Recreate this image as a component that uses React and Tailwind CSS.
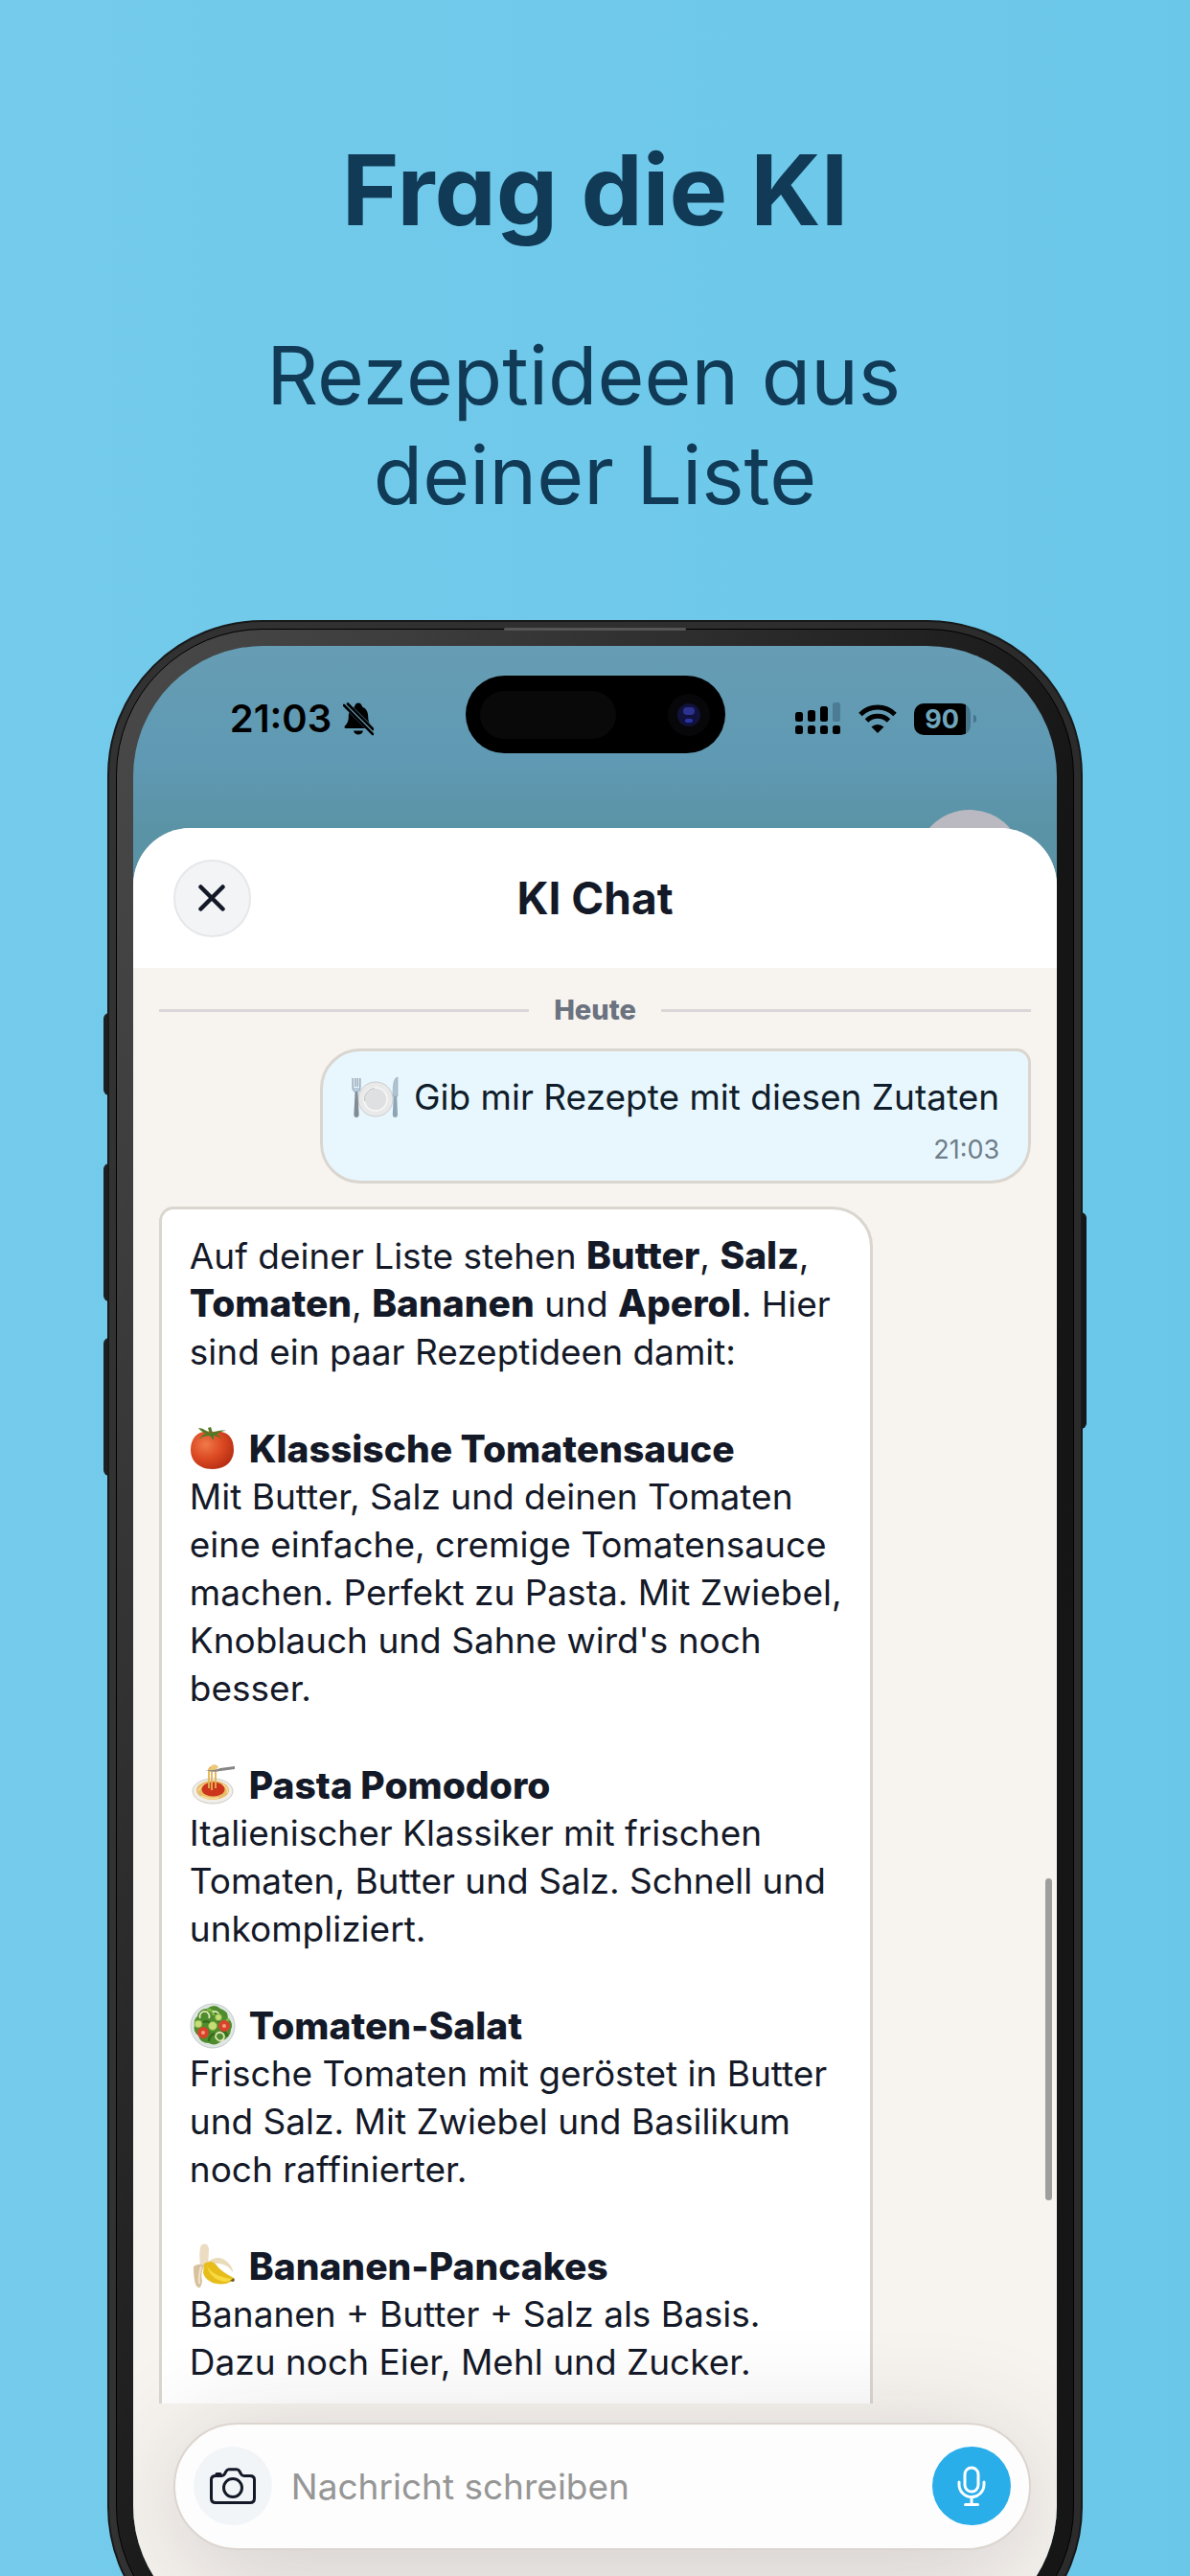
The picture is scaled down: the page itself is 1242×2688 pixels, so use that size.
const SANS = 'font-["Inter","Noto_Sans",sans-serif]';

function MutedBell() {
  return (
    <svg className="h-9 w-8" viewBox="0 0 32 36" aria-hidden="true">
      <path d="M12 5.500C12.500 2.800 14 1.500 16 1.500s3.500 1.300 4 4c4 1.500 6 5 6.200 10 .1 5 1 7 3.800 10 .9 1 .5 2.500-1 2.500H3c-1.500 0-2-1.500-1-2.500 2.800-3 3.700-5 3.800-10C6 10.500 8 7 12 5.500z" fill="#000" />
      <path d="M11 30.500h10c-.6 2.600-2.600 4-5 4s-4.400-1.400-5-4z" fill="#000" />
      <path d="M1.500 1.500 32 32" stroke="#639bb3" strokeWidth="7" />
      <path d="M1 4 31 34" stroke="#000" strokeWidth="2.600" strokeLinecap="round" />
      <path d="M5 2.500 31.500 29" stroke="#000" strokeWidth="2.600" strokeLinecap="round" />
    </svg>
  );
}

function Signal() {
  return (
    <svg className="h-[34px] w-12" viewBox="0 0 48 34" aria-hidden="true">
      <rect x="0" y="10" width="8" height="10" rx="2.500" />
      <rect x="13" y="8" width="8" height="12" rx="2.500" />
      <rect x="26" y="4" width="8" height="16" rx="2.500" />
      <rect x="39" y="0" width="8" height="20" rx="2.500" fill="#4b7c94" />
      <rect x="0" y="24" width="8" height="9" rx="2.500" />
      <rect x="13" y="24" width="8" height="9" rx="2.500" />
      <rect x="26" y="24" width="8" height="9" rx="2.500" />
      <rect x="39" y="24" width="8" height="9" rx="2.500" />
    </svg>
  );
}

function Wifi() {
  return (
    <svg className="h-[31px] w-10" viewBox="0 0 40 31" aria-hidden="true">
      <path d="M2 10.500a25.500 25.500 0 0 1 36 0" fill="none" stroke="#000" strokeWidth="5" />
      <path d="M8.500 17a16.300 16.300 0 0 1 23 0" fill="none" stroke="#000" strokeWidth="5" />
      <path d="M13.500 23.500a9.500 9.500 0 0 1 13 0L20 30z" />
    </svg>
  );
}

function Plate() {
  return (
    <svg className="h-11 w-[50px] shrink-0" viewBox="0 0 50 44" role="img" aria-label="Teller">
      <circle cx="25" cy="24" r="18" fill="#e9e9ea" stroke="#c9ccd0" strokeWidth="1" />
      <circle cx="25" cy="24" r="12" fill="#dfe0e1" stroke="#f8f8f8" strokeWidth="1.500" />
      <path d="M13.500 26A11.500 11.500 0 0 1 24 12.500" fill="none" stroke="#c2c3c5" strokeWidth="1" />
      <path d="M1.200 2v9.500q0 4 3.800 5 3.800-1 3.800-5V2M3.800 2v9M6.300 2v9" fill="none" stroke="#9fb0bd" strokeWidth="1.600" />
      <path d="M2 12h6l-1 4H3z" fill="#b4cbdd" />
      <path d="M3.600 16h2.800l1.200 24q0 3-2.600 3t-2.600-3z" fill="#818b93" />
      <path d="M48 1c-4 1-5 8-4.800 20H48z" fill="#afc2cf" stroke="#8fa2b0" strokeWidth=".6" />
      <path d="M43.800 21h3.400l.8 19q0 3-2.600 3t-2.600-3z" fill="#8fa5b6" />
    </svg>
  );
}

function Tomato() {
  return (
    <svg className="size-12 shrink-0" viewBox="0 0 48 48" role="img" aria-label="Tomate">
      <defs>
        <radialGradient id="tomato" cx=".35" cy=".35" r=".75">
          <stop offset="0" stopColor="#f0794a" />
          <stop offset=".5" stopColor="#dc4a22" />
          <stop offset="1" stopColor="#b32b12" />
        </radialGradient>
      </defs>
      <path d="M24 6C9 3 1 12 1 25c0 12 9 20 23 20s22-9 22-20C46 11 39 4 24 6z" fill="url(#tomato)" />
      <path d="M21 8 19 2l3-1 2 6c5-2 9-3 14-2-4 0-8 2-10 4 3 1 4 2 5 4-3-2-6-3-8-3l0 5-4-5c-4 0-8 1-11 4 1-3 4-5 7-6C14 6 11 5 9 2c4 0 9 3 12 6z" fill="#4f7a26" />
    </svg>
  );
}

function Spaghetti() {
  return (
    <svg className="size-12 shrink-0" viewBox="0 0 48 48" role="img" aria-label="Spaghetti">
      <ellipse cx="24" cy="30" rx="21" ry="13" fill="#f0eee9" stroke="#cfcac2" />
      <ellipse cx="24" cy="29" rx="17" ry="10" fill="#e8bd6b" />
      <path d="M9 30q4-8 14-8M12 35q8 4 18 2M34 23q7 4 5 9" stroke="#f8db98" strokeWidth="1.500" fill="none" />
      <ellipse cx="24.500" cy="28" rx="12" ry="7.500" fill="#cc351c" />
      <path d="M20 27V9q0-4 4-4h4M23 29V8M27 27V6" stroke="#e3b254" strokeWidth="1.800" fill="none" />
      <path d="M23 3q5-2 7 2l-4 4-6 1z" fill="#ecc878" />
      <path d="M16 8q10 1 16-2l15-2v3l-15 2q-8 2-16-1z" fill="#868585" />
    </svg>
  );
}

function Salad() {
  return (
    <svg className="size-12 shrink-0" viewBox="0 0 48 48" role="img" aria-label="Salat">
      <circle cx="24" cy="24" r="23" fill="#dfe6e3" stroke="#c3ccc8" />
      <path d="M8 14q2-8 10-8 8-6 14 0 8 2 8 10 6 5 3 12-1 9-9 11-7 7-14 3-9 0-11-8-6-4-4-11-1-6 3-9z" fill="#4e8c2d" />
      <path d="M10 28q7-4 10 4M26 10q6 2 4 10M33 30q5-1 6 5M14 20q5-2 8 2M20 40q0-6 6-8" stroke="#336d1c" strokeWidth="2.500" fill="none" />
      <path d="M18 7q7 0 7 6M35 20q5 0 5-4" stroke="#7cb944" strokeWidth="3" fill="none" />
      <path d="M11 16a5 5 0 1 1 9 0M24 9q6-1 7 5M27 36a4.500 4.500 0 1 1 8 2q-4 4-8-2" stroke="#dfe5b4" strokeWidth="1.800" fill="none" />
      <g fill="#c4dd76" stroke="#7fab3d"><circle cx="9" cy="22" r="4" /><circle cx="24" cy="24" r="4.500" /><circle cx="30" cy="15" r="3.500" /></g>
      <circle cx="14" cy="31" r="6" fill="#d8432c" /><circle cx="36" cy="24" r="6" fill="#d8432c" />
      <circle cx="14" cy="31" r="2" fill="#f3a07e" /><circle cx="36" cy="24" r="2" fill="#f3a07e" />
    </svg>
  );
}

function Banana() {
  return (
    <svg className="size-12 shrink-0" viewBox="0 0 48 48" role="img" aria-label="Banane">
      <path d="M11 24Q9 3 13 1q6-2 7 5l-1 20z" fill="#ecdcc2" />
      <path d="M18 20Q30 10 40 20q5 5 5 10-5-8-14-9z" fill="#eadbb9" />
      <path d="M15 21q9-5 14 3 5 6 17 12-4 8-18 6-11-2-14-11z" fill="#e7bd1c" />
      <path d="M18 23q5 11 26 14-3 3-8 3-15-3-18-17z" fill="#f7da3f" />
      <path d="M46 36q2 3-1 4l-3-1z" fill="#6e5a20" />
      <path d="M4 24q6-4 11-1-4 8-2 16-1 8-4 7-5-2-5-22z" fill="#d8c19d" />
      <path d="M12 24q-3 10-2 18" stroke="#efe2cb" strokeWidth="2" fill="none" />
    </svg>
  );
}

function CameraIcon() {
  return (
    <svg className="h-[38px] w-12" viewBox="0 0 48 38" fill="none" stroke="#141928" strokeWidth="3" aria-hidden="true">
      <path d="M6 8.500h6.500c1.500 0 2.300-.7 3-2l1.500-2.700c.8-1.500 1.500-2.100 3-2.100h8c1.500 0 2.200.6 3 2.100l1.500 2.700c.7 1.300 1.500 2 3 2H42c3 0 4.500 1.200 4.500 4V32c0 3-1.500 4.500-4.500 4.500H6c-3 0-4.500-1.500-4.500-4.500V12.500c0-2.800 1.500-4 4.500-4z" strokeLinejoin="round" />
      <circle cx="24" cy="21" r="9.500" />
      <path d="M7 6.500h4" strokeLinecap="round" />
    </svg>
  );
}

function MicIcon() {
  return (
    <svg className="h-[42px] w-[30px]" viewBox="0 0 30 42" fill="none" stroke="#fff" strokeWidth="3" strokeLinecap="round" aria-hidden="true">
      <rect x="8" y="2" width="14" height="25" rx="7" />
      <path d="M2 17v2.500a13 13 0 0 0 26 0V17M15 33v7M8.500 40.500h13" />
    </svg>
  );
}

function Strong({ children }) {
  return <b className="text-[39px] leading-none font-extrabold">{children}</b>;
}

function Recipe({ icon, title, children }) {
  return (
    <section>
      <h2 className="flex h-[50px] items-center gap-[14px] text-[39px] font-extrabold">{icon}{title}</h2>
      <p>{children}</p>
    </section>
  );
}

function StatusBar() {
  return (
    <div className="grid h-[190px] shrink-0 grid-cols-[1fr_271px_1fr] items-start pt-[31px] text-black">
      <div className="flex h-[90px] items-center gap-3 pl-[101px]">
        <span className="text-[40px] leading-none font-semibold">21:03</span>
        <MutedBell />
      </div>
      <div className="flex h-[81px] items-center justify-between rounded-full bg-black pr-4 pl-[15px]">
        <span className="h-[50px] w-[142px] rounded-full bg-[#090909]" />
        <span className="flex size-11 items-center justify-center rounded-full bg-[#070709]">
          <span className="flex size-6 flex-col items-center justify-center gap-1 rounded-full bg-[#10123c]">
            <span className="h-2 w-3 rounded-full bg-[#2c328f]" />
            <span className="h-1 w-2 rounded-full bg-[#2734a6]" />
          </span>
        </span>
      </div>
      <div className="flex h-[90px] items-center gap-[18px] pl-[73px]">
        <Signal />
        <Wifi />
        <div className="flex items-center gap-[3px]">
          <span className="flex h-[33px] w-[59px] items-center justify-center rounded-[10px] bg-linear-to-r from-black from-92% to-[#47758b] to-92% text-[27px] leading-none font-bold text-[#6fa6bd]">90</span>
          <span className="h-2 w-[3px] rounded-r-full bg-[#47758b]" />
        </div>
      </div>
    </div>
  );
}

function Phone() {
  return (
    <div className="relative mx-auto aspect-[1018/2130] min-h-0 w-[82%] shrink-0">
      <span className="absolute top-[410px] -left-1 h-[86px] w-2 rounded-l-md bg-[#1c2022]" />
      <span className="absolute top-[567px] -left-1 h-[144px] w-2 rounded-l-md bg-[#1c2022]" />
      <span className="absolute top-[749px] -left-1 h-[144px] w-2 rounded-l-md bg-[#1c2022]" />
      <span className="absolute top-[618px] -right-1 h-[226px] w-2 rounded-r-md bg-[#14181a]" />
      <div className="relative h-full rounded-[162px] border-2 border-[#17191a] bg-linear-to-r from-[#323232] to-[#2b2b2b] p-[7px]">
        <div className="h-full rounded-[153px] border border-black bg-linear-[115deg,#4a4a4a,#3d3d3d_15%,#151515_55%,#161616] p-[17px]">
          <div className="relative flex h-full flex-col overflow-hidden rounded-[136px] bg-linear-[180deg,#669db4,#5f99b3_120px,#5b93a6_190px]">
            <span className="absolute top-[171px] right-[35px] size-[112px] rounded-full bg-[#bab8c0]" />
            <StatusBar />
            <main className="relative flex min-h-0 flex-1 flex-col rounded-t-[60px] bg-[#f7f4ef] text-[#141928]">
              <header className="grid h-[146px] shrink-0 grid-cols-[81px_1fr_81px] items-center rounded-t-[60px] bg-white px-[42px]">
                <button type="button" aria-label="Schließen" className="flex size-[81px] items-center justify-center rounded-full border-2 border-[#e5e7ea] bg-[#f2f4f6]">
                  <svg className="size-7" viewBox="0 0 28 28" stroke="#141928" strokeWidth="4.500" strokeLinecap="round" aria-hidden="true"><path d="m2.500 2.500 23 23m0-23-23 23" /></svg>
                </button>
                <h1 className="text-center text-[46px] leading-none font-bold">KI Chat</h1>
              </header>
              <div className="flex min-h-0 flex-1 flex-col overflow-hidden px-[27px] pt-6">
                <div className="flex h-10 shrink-0 items-center gap-[26px] text-[29px] font-extrabold text-[#6b7280]">
                  <span className="h-[3px] flex-1 bg-[#d9d7d8]" />
                  Heute
                  <span className="h-[3px] flex-1 bg-[#d9d7d8]" />
                </div>
                <div className="mt-5 flex h-[141px] shrink-0 flex-col self-end rounded-[42px] rounded-tr-[15px] border-[3px] border-[#dad6cf] bg-[#e8f7fe] px-[30px] pt-[23px]">
                  <p className="flex h-[50px] items-center gap-[15px] text-[37px] leading-[50px] text-[#101d2a]"><Plate />Gib mir Rezepte mit diesen Zutaten</p>
                  <time className="mt-[14px] self-end text-[27px] leading-8 text-[#6e7d89]">21:03</time>
                </div>
                <article className="mt-6 flex w-[745px] shrink-0 flex-col gap-[51px] rounded-tl-[15px] rounded-tr-[42px] border-[3px] border-[#dad6cf] bg-white px-[29px] pt-[24px] pb-8 text-[37px] leading-[50px] whitespace-nowrap">
                  <p>Auf deiner Liste stehen <Strong>Butter</Strong>, <Strong>Salz</Strong>,<br /><Strong>Tomaten</Strong>, <Strong>Bananen</Strong> und <Strong>Aperol</Strong>. Hier<br />sind ein paar Rezeptideen damit:</p>
                  <Recipe icon={<Tomato />} title="Klassische Tomatensauce">Mit Butter, Salz und deinen Tomaten<br />eine einfache, cremige Tomatensauce<br />machen. Perfekt zu Pasta. Mit Zwiebel,<br />Knoblauch und Sahne wird's noch<br />besser.</Recipe>
                  <Recipe icon={<Spaghetti />} title="Pasta Pomodoro">Italienischer Klassiker mit frischen<br />Tomaten, Butter und Salz. Schnell und<br />unkompliziert.</Recipe>
                  <Recipe icon={<Salad />} title="Tomaten-Salat">Frische Tomaten mit geröstet in Butter<br />und Salz. Mit Zwiebel und Basilikum<br />noch raffinierter.</Recipe>
                  <Recipe icon={<Banana />} title="Bananen-Pancakes">Bananen + Butter + Salz als Basis.<br />Dazu noch Eier, Mehl und Zucker.</Recipe>
                </article>
              </div>
              <span className="absolute top-[1096px] right-[5px] h-[336px] w-[7px] rounded-full bg-[#a09e9c]" />
              <form className="relative mt-5 mr-[27px] mb-[90px] ml-[42px] flex h-[133px] shrink-0 items-center gap-5 rounded-full border-2 border-[#dcd5cf] bg-[#fdfdfd] px-[19px] shadow-[0_20px_120px_rgba(50,30,50,0.2)]">
                <button type="button" aria-label="Foto aufnehmen" className="flex size-[82px] shrink-0 items-center justify-center rounded-full bg-[#f2f5f8]"><CameraIcon /></button>
                <input aria-label="Nachricht" placeholder="Nachricht schreiben" className="min-w-0 flex-1 bg-transparent text-[37px] outline-none placeholder:text-[#969696]" />
                <button type="button" aria-label="Spracheingabe" className="flex size-[82px] shrink-0 items-center justify-center rounded-full bg-[#29aeea]"><MicIcon /></button>
              </form>
            </main>
          </div>
        </div>
      </div>
      <span className="absolute top-2 left-1/2 h-[3px] w-[190px] -translate-x-1/2 rounded-full bg-[#555]" />
    </div>
  );
}

export default function App() {
  return (
    <div className={`${SANS} flex h-dvh flex-col overflow-hidden bg-linear-to-r from-[#74cbeb] to-[#6bc7e9]`}>
      <div className="flex h-[647px] shrink-0 flex-col items-center pt-[146px] text-center text-[#103a56] [font-feature-settings:'cv11']">
        <p className="text-[102px] leading-[104px] font-bold">Frag die KI</p>
        <p className="mt-[90px] text-[84px] leading-[104px]">Rezeptideen aus&nbsp;<br />deiner Liste</p>
      </div>
      <Phone />
    </div>
  );
}
